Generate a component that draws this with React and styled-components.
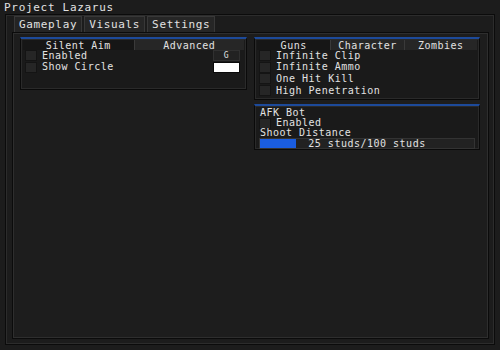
import React from "react";
import styled, { createGlobalStyle } from "styled-components";

const GlobalStyle = createGlobalStyle`
  html, body {
    margin: 0;
    padding: 0;
    background: #1c1c1c;
  }
  body {
    font-family: "DejaVu Sans Mono", "Liberation Mono", monospace;
    color: #e2e2e2;
  }
`;

const Window = styled.div`
  width: 500px;
  height: 350px;
  box-sizing: border-box;
  background: #1c1c1c;
  display: flex;
  flex-direction: column;
  overflow: hidden;
`;

const Title = styled.div`
  height: 14px;
  line-height: 15px;
  padding-left: 4px;
  font-size: 11px;
  letter-spacing: 0.7px;
`;

const Frame = styled.div`
  flex: 1;
  margin: 0 5px 5px 5px;
  border: 1px solid #0b0b0b;
  box-shadow: inset 0 0 0 1px #2c2c2c;
  padding: 1px 5px 5px 6px;
  display: flex;
  flex-direction: column;
`;

const TabBar = styled.div`
  display: flex;
  gap: 2px;
  padding-left: 2px;
  height: 16px;
`;

const Tab = styled.div`
  height: 16px;
  line-height: 16px;
  padding: 0 4px;
  font-size: 11px;
  letter-spacing: 0.65px;
  background: ${p => (p.active ? "#242424" : "#262626")};
  border: 1px solid #383838;
  border-bottom: none;
  box-sizing: border-box;
`;

const Content = styled.div`
  flex: 1;
  border: 1px solid #0b0b0b;
  box-shadow: inset 0 0 0 1px #2e2e2e;
  background: #1d1d1d;
  padding: 4px 7px 0 7px;
  display: grid;
  grid-template-columns: 227px 226px;
  column-gap: 7px;
  align-items: start;
`;

const Column = styled.div`
  display: flex;
  flex-direction: column;
  gap: 4px;
`;

const Group = styled.div`
  border: 1px solid #0a0a0a;
  border-top: 2px solid #1d4a9a;
  box-shadow: inset 0 0 0 1px #2a2a2a;
  background: #1a1a1a;
  height: ${p => p.h}px;
  box-sizing: border-box;
  padding: 1px 2px;
`;

const SubTabs = styled.div`
  display: grid;
  grid-template-columns: repeat(${p => p.n}, 1fr);
  height: 10px;
`;

const SubTab = styled.div`
  text-align: center;
  font-size: 10px;
  letter-spacing: 0.5px;
  line-height: 9px;
  padding-top: 1px;
  background: ${p => (p.active ? "#161616" : "#262626")};
  border-left: ${p => (p.active ? "none" : "1px solid #3a3a3a")};
`;

const Row = styled.div`
  display: flex;
  align-items: center;
  height: ${p => p.h || 11.6}px;
  font-size: 10px;
  letter-spacing: 0.5px;
  padding-left: 2px;
`;

const Label = styled.span`
  flex: 1;
  line-height: 8px;
  padding-left: ${p => (p.plain ? 1 : 0)}px;
`;

const Check = styled.span`
  width: 10px;
  height: 9px;
  background: #262626;
  border: 1px solid #141414;
  margin-right: 5px;
  flex: none;
`;

const KeyBox = styled.span`
  width: 25px;
  height: 9px;
  margin-right: 4px;
  background: #222;
  border: 1px solid #303030;
  font-size: 8px;
  line-height: 9px;
  text-align: center;
`;

const Swatch = styled.span`
  width: 25px;
  height: 9px;
  margin-right: 4px;
  background: #fff;
  border: 1px solid #0a0a0a;
`;

const Slider = styled.div`
  position: relative;
  height: 9px;
  margin: 1px 2px 0 2px;
  background: #222;
  border: 1px solid #333;
  font-size: 10px;
  letter-spacing: 0.5px;
  line-height: 9px;
  text-align: center;
`;

const Fill = styled.div`
  position: absolute;
  left: 0;
  top: 0;
  bottom: 0;
  background: #1a5de0;
`;

const SliderText = styled.span`
  position: relative;
`;

const CheckRow = ({ label, h, children }) => (
  <Row h={h}>
    <Check />
    <Label>{label}</Label>
    {children}
  </Row>
);

export default function App() {
  const value = 25;
  const max = 100;
  // the bar fills 17% of the track at 25 of 100, as in the original
  const fill = (value / max) * 68;
  return (
    <Window>
      <GlobalStyle />
      <Title>Project Lazarus</Title>
      <Frame>
        <TabBar>
          <Tab active>Gameplay</Tab>
          <Tab>Visuals</Tab>
          <Tab>Settings</Tab>
        </TabBar>
        <Content>
          <Column>
            <Group h={53}>
              <SubTabs n={2}>
                <SubTab active>Silent Aim</SubTab>
                <SubTab>Advanced</SubTab>
              </SubTabs>
              <CheckRow label="Enabled">
                <KeyBox>G</KeyBox>
              </CheckRow>
              <CheckRow label="Show Circle">
                <Swatch />
              </CheckRow>
            </Group>
          </Column>
          <Column>
            <Group h={63}>
              <SubTabs n={3}>
                <SubTab active>Guns</SubTab>
                <SubTab>Character</SubTab>
                <SubTab>Zombies</SubTab>
              </SubTabs>
              <CheckRow label="Infinite Clip" />
              <CheckRow label="Infinite Ammo" />
              <CheckRow label="One Hit Kill" />
              <CheckRow label="High Penetration" />
            </Group>
            <Group h={46}>
              <Row h={11}>
                <Label plain>AFK Bot</Label>
              </Row>
              <CheckRow label="Enabled" h={10} />
              <Row h={9}>
                <Label plain>Shoot Distance</Label>
              </Row>
              <Slider>
                <Fill style={{ width: `${fill}%` }} />
                <SliderText>
                  {value} studs/{max} studs
                </SliderText>
              </Slider>
            </Group>
          </Column>
        </Content>
      </Frame>
    </Window>
  );
}
